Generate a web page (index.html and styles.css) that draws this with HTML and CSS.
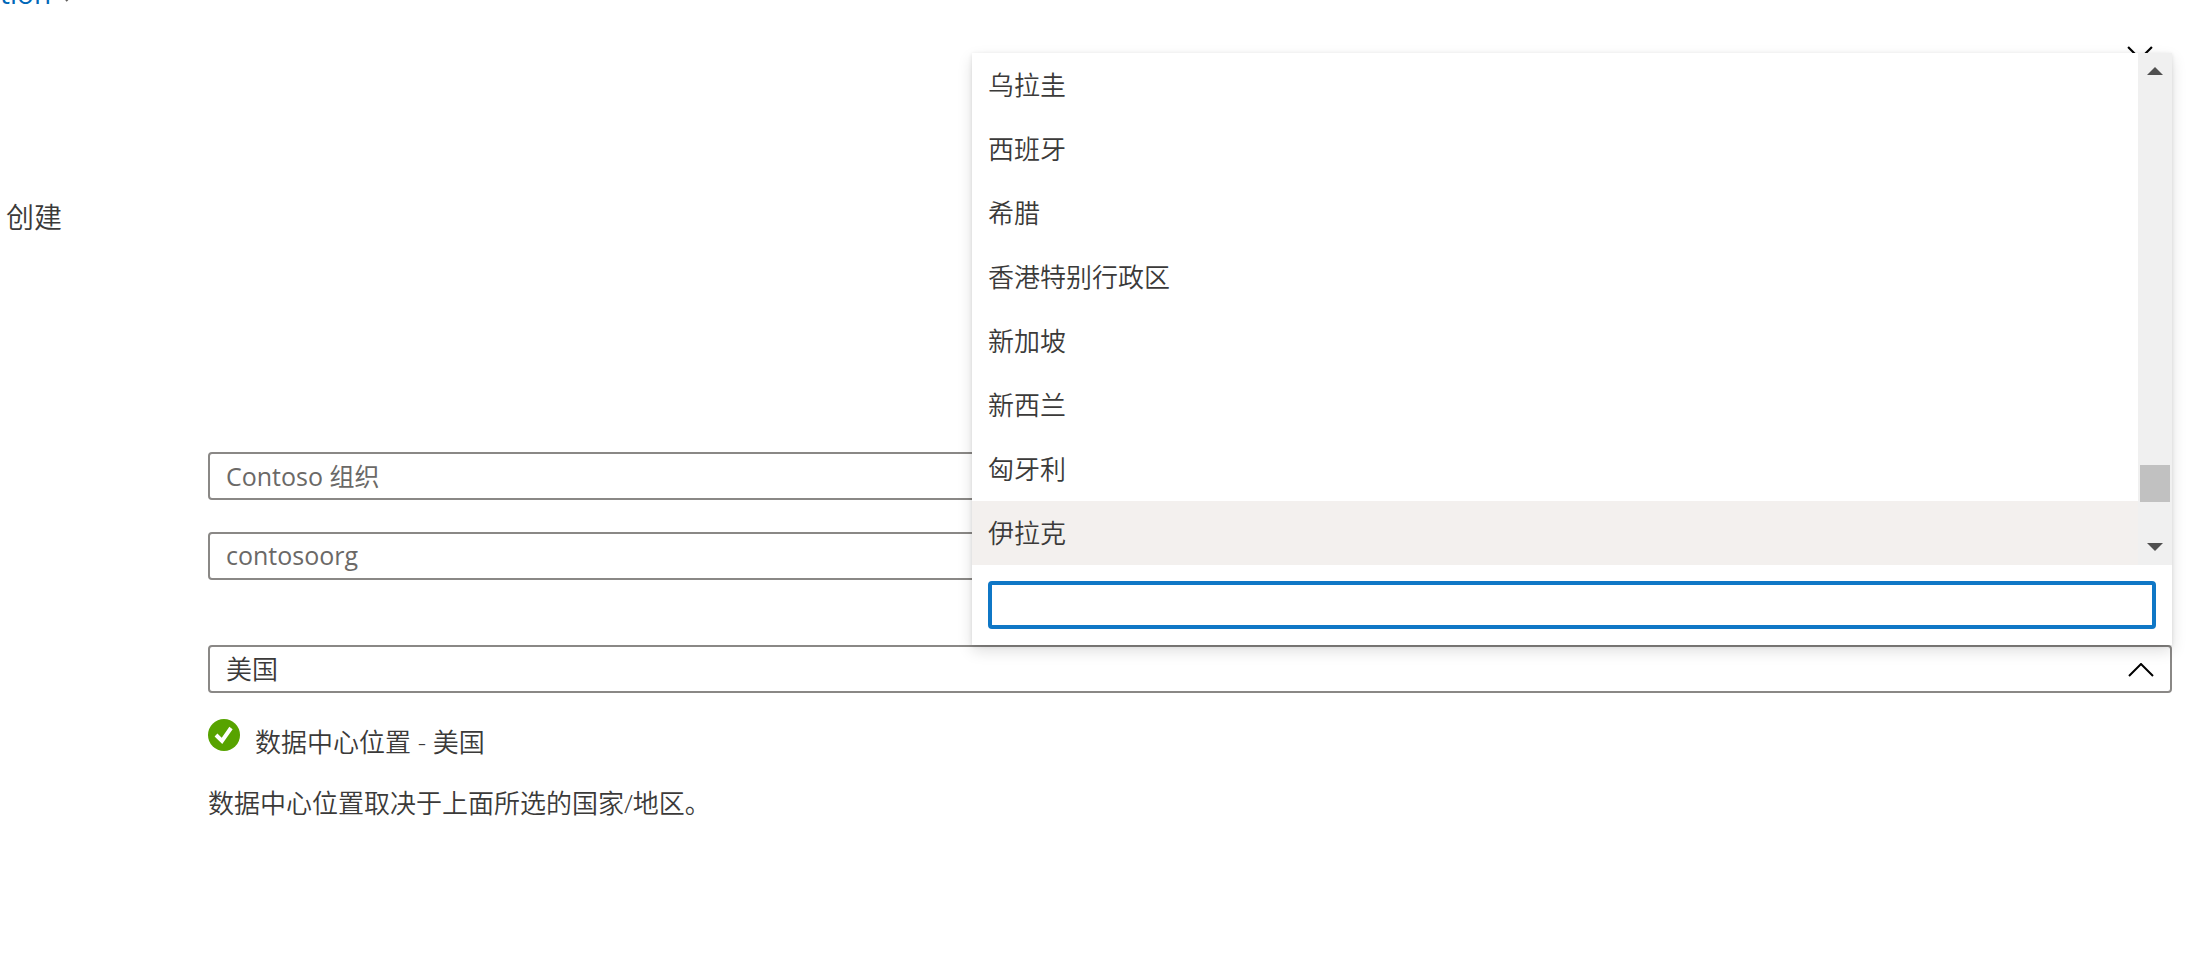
FILE: index.html
```html
<!DOCTYPE html>
<html lang="zh-CN">
<head>
  <meta charset="UTF-8">
  <meta name="viewport" content="width=device-width, initial-scale=1">
  <title>创建</title>
  <link rel="stylesheet" href="styles.css">
</head>
<body>

<!-- Breadcrumb, scrolled almost out of view -->
<nav class="breadcrumb">
  <a href="#">tion</a>
  <svg class="crumb-arrow" viewBox="0 0 8 14" aria-hidden="true"><path d="M1 1l6 6-6 6"/></svg>
</nav>

<div class="toolbar">
  <button type="button" class="close" aria-label="关闭">
    <svg viewBox="0 0 24 24" aria-hidden="true"><path d="M1 1l22 22M23 1L1 23"/></svg>
  </button>
</div>

<h1>创建</h1>

<form class="form">
  <input type="text" class="field org-name" aria-label="组织名称" value="Contoso 组织">
  <input type="text" class="field domain" aria-label="初始域名" value="contosoorg">

  <div class="combo">
    <select class="field" aria-label="国家/地区">
      <option>美国</option>
    </select>
    <svg class="chevron" viewBox="0 0 26 14" aria-hidden="true"><path d="M1 13L13 1l12 12"/></svg>

    <div class="menu">
      <div class="menu-body">
        <ul class="options" role="listbox" aria-label="国家/地区">
          <li role="option">乌拉圭</li>
          <li role="option">西班牙</li>
          <li role="option">希腊</li>
          <li role="option">香港特别行政区</li>
          <li role="option">新加坡</li>
          <li role="option">新西兰</li>
          <li role="option">匈牙利</li>
          <li role="option" class="active">伊拉克</li>
        </ul>
        <div class="scrollbar">
          <button type="button" class="scroll-up" aria-label="向上滚动"></button>
          <div class="track"><div class="thumb"></div></div>
          <button type="button" class="scroll-down" aria-label="向下滚动"></button>
        </div>
      </div>
      <div class="search">
        <input type="text" aria-label="筛选">
      </div>
    </div>
  </div>

  <div class="status">
    <svg class="check" viewBox="0 0 32 32" aria-hidden="true">
      <circle cx="16" cy="16" r="16"/>
      <path d="M8 16l6 6 9-13"/>
    </svg>
    <span>数据中心位置 - 美国</span>
  </div>
  <p class="hint">数据中心位置取决于上面所选的国家/地区。</p>
</form>

</body>
</html>
```

FILE: styles.css
```css
* {
  box-sizing: border-box;
}

body {
  margin: 0;
  background: #fff;
  color: #3b3a39;
  font-family: "Open Sans", "Noto Sans CJK SC", sans-serif;
  font-size: 26px;
  font-weight: 350;
  line-height: 32px;
  overflow-x: hidden;
}

/* Page top */
.breadcrumb {
  display: flex;
  align-items: center;
  gap: 14px;
  height: 32px;
  margin-top: -23px;
}

.breadcrumb a {
  color: #0067b8;
  font-size: 28px;
  font-weight: 400;
  text-decoration: none;
}

.crumb-arrow {
  width: 8px;
  height: 14px;
  margin-top: 4px;
  fill: none;
  stroke: #605e5c;
  stroke-width: 2;
}

.toolbar {
  display: flex;
  justify-content: flex-end;
  padding: 37px 48px 0;
}

.close {
  width: 26px;
  height: 26px;
  padding: 0;
  border: none;
  background: none;
}

.close svg {
  display: block;
  width: 26px;
  height: 26px;
  stroke: #000;
  stroke-width: 2;
}

h1 {
  margin: 127px 0 0 6px;
  font-size: 28px;
  font-weight: 350;
  line-height: 36px;
}

/* Form */
.form {
  display: flex;
  flex-direction: column;
  margin: 217px 29px 0 208px;
}

.field {
  display: block;
  width: 100%;
  height: 48px;
  padding: 0 16px 2px;
  border: 2px solid #8a8886;
  border-radius: 4px;
  background: #fff;
  color: #6b6967;
  font: inherit;
  appearance: none;
}

.org-name,
.domain {
  font-size: 25px;
  font-weight: 400;
}

.domain {
  margin-top: 32px;
}

.combo {
  position: relative;
  margin-top: 65px;
}

.combo .field {
  padding-bottom: 0;
  color: #3b3a39;
}

.chevron {
  position: absolute;
  right: 18px;
  top: 18px;
  width: 26px;
  height: 14px;
  fill: none;
  stroke: #000;
  stroke-width: 2;
}

/* Menu opens upwards over the fields */
.menu {
  position: absolute;
  right: 0;
  bottom: 100%;
  width: calc(61% + 2px);
  background: #fff;
  box-shadow: 0 6px 14px rgba(0, 0, 0, 0.13), 0 1px 4px rgba(0, 0, 0, 0.11);
}

.menu-body {
  display: flex;
}

.options {
  flex: 1;
  margin: 0;
  padding: 0;
  list-style: none;
}

.options li {
  padding: 16px;
}

.options .active {
  background: #f3f0ee;
}

.scrollbar {
  display: flex;
  flex-direction: column;
  width: 34px;
  background: #f0f0f0;
}

.scroll-up,
.scroll-down {
  display: flex;
  align-items: center;
  justify-content: center;
  height: 36px;
  padding: 0;
  border: none;
  background: none;
}

.scroll-up::before,
.scroll-down::before {
  content: "";
  border: 8px solid transparent;
}

.scroll-up::before {
  border-top: none;
  border-bottom-color: #505050;
}

.scroll-down::before {
  border-bottom: none;
  border-top-color: #505050;
}

.track {
  display: flex;
  flex: 1;
  flex-direction: column;
  justify-content: flex-end;
  padding: 0 2px 27px;
}

.thumb {
  height: 37px;
  background: #c1c1c1;
}

.search {
  padding: 16px;
}

.search input {
  display: block;
  width: 100%;
  height: 48px;
  padding: 0 12px;
  border: 4px solid #0f77c6;
  border-radius: 4px;
  outline: none;
  font: inherit;
}

/* Data center note */
.status {
  display: flex;
  gap: 15px;
  margin-top: 26px;
}

.status span {
  padding-top: 7px;
}

.check {
  width: 32px;
  height: 32px;
  fill: #57a300;
}

.check path {
  fill: none;
  stroke: #fff;
  stroke-width: 4;
}

.hint {
  margin: 29px 0 0;
}
```
